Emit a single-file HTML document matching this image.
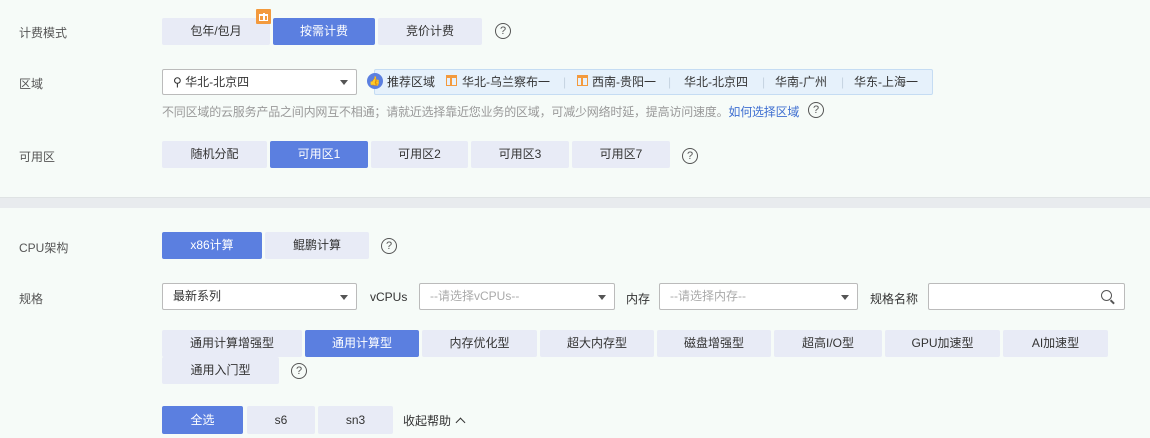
<!DOCTYPE html>
<html><head><meta charset="utf-8"><style>
*{margin:0;padding:0;box-sizing:border-box}
body{width:1150px;height:438px;background:#f6fbf8;font-family:"Liberation Sans","Noto Sans CJK SC",sans-serif;font-size:12px;color:#333;position:relative;overflow:hidden}
.a{position:absolute;white-space:nowrap}
.lbl{position:absolute;left:19px;color:#555}
.b{position:absolute;background:#e8ebf6;color:#333;text-align:center;border-radius:2px}
.on{background:#5b7fe0;color:#fff}
.q{position:absolute;width:16px;height:16px;border:1.3px solid #555;border-radius:50%;font-size:11px;line-height:14px;text-align:center;color:#555}
.sel{position:absolute;background:#fff;border:1px solid #bbb;border-radius:2px;padding-left:10px}
.sel:after{content:"";position:absolute;right:8px;top:50%;margin-top:-2px;border:4px solid transparent;border-top:5px solid #555;border-bottom:0}
.ph{color:#aaa}
.s{position:absolute;top:5px;color:#c5d3e0}
.g{position:absolute;top:6px;width:11px;height:11px;border:1.5px solid #f39a3d;border-top-width:3px}
.g:after{content:"";position:absolute;left:3px;top:-2px;width:1.5px;height:9px;background:#f39a3d}
</style></head><body>
<div class="lbl" style="top:24px">计费模式</div>
<div class="b" style="left:162px;top:18px;width:108px;height:27px;line-height:27px">包年/包月</div>
<div class="b on" style="left:273px;top:18px;width:102px;height:27px;line-height:27px">按需计费</div>
<div class="b" style="left:378px;top:18px;width:104px;height:27px;line-height:27px">竞价计费</div>
<div class="a" style="left:256px;top:9px;width:15px;height:15px;background:#f39a3d;border-radius:1px"><div style="position:absolute;left:3px;top:5px;width:9px;height:7px;border:1.5px solid #fff;border-top-width:2px"></div><div style="position:absolute;left:7px;top:4px;width:1.5px;height:8px;background:#fff"></div></div>
<div class="q" style="left:495px;top:23px">?</div>

<div class="lbl" style="top:75px">区域</div>
<div class="sel" style="left:162px;top:69px;width:195px;height:26px;line-height:24px">⚲ 华北-北京四</div>
<div class="a" style="left:374px;top:69px;width:559px;height:26px;background:#e6f1fb;border:1px solid #c5dcf3;border-radius:2px"></div>
<div class="a" style="left:367px;top:73px;width:16px;height:16px;border-radius:50%;background:#5b7fe0;color:#fff;font-size:9px;line-height:16px;text-align:center">👍</div>
<div class="a" style="left:387px;top:69px;line-height:26px;width:600px;height:26px">
<span class="a" style="left:0;top:0">推荐区域</span>
<span class="g" style="left:59px"></span>
<span class="a" style="left:75px;top:0">华北-乌兰察布一</span>
<span class="s" style="left:176px;top:0">|</span>
<span class="g" style="left:190px"></span>
<span class="a" style="left:205px;top:0">西南-贵阳一</span>
<span class="s" style="left:281px;top:0">|</span>
<span class="a" style="left:297px;top:0">华北-北京四</span>
<span class="s" style="left:375px;top:0">|</span>
<span class="a" style="left:388px;top:0">华南-广州</span>
<span class="s" style="left:454px;top:0">|</span>
<span class="a" style="left:467px;top:0">华东-上海一</span>
</div>
<div class="a" style="left:162px;top:103px;color:#999;font-size:12px;letter-spacing:-0.2px">不同区域的云服务产品之间内网互不相通；请就近选择靠近您业务的区域，可减少网络时延，提高访问速度。<span style="color:#3f6fd1">如何选择区域</span></div>
<div class="q" style="left:808px;top:102px">?</div>

<div class="lbl" style="top:148px">可用区</div>
<div class="b" style="left:162px;top:141px;width:105px;height:27px;line-height:27px">随机分配</div>
<div class="b on" style="left:270px;top:141px;width:98px;height:27px;line-height:27px">可用区1</div>
<div class="b" style="left:371px;top:141px;width:97px;height:27px;line-height:27px">可用区2</div>
<div class="b" style="left:471px;top:141px;width:98px;height:27px;line-height:27px">可用区3</div>
<div class="b" style="left:572px;top:141px;width:98px;height:27px;line-height:27px">可用区7</div>
<div class="q" style="left:682px;top:148px">?</div>

<div class="a" style="left:0;top:197px;width:1150px;height:11px;background:#e8ebee;border-top:1px solid #dfe3e4"></div>

<div class="lbl" style="top:239px">CPU架构</div>
<div class="b on" style="left:162px;top:232px;width:100px;height:27px;line-height:27px">x86计算</div>
<div class="b" style="left:265px;top:232px;width:104px;height:27px;line-height:27px">鲲鹏计算</div>
<div class="q" style="left:381px;top:238px">?</div>

<div class="lbl" style="top:290px">规格</div>
<div class="sel" style="left:162px;top:283px;width:195px;height:27px;line-height:25px">最新系列</div>
<div class="a" style="left:370px;top:290px">vCPUs</div>
<div class="sel ph" style="left:419px;top:283px;width:196px;height:27px;line-height:25px">--请选择vCPUs--</div>
<div class="a" style="left:626px;top:290px">内存</div>
<div class="sel ph" style="left:659px;top:283px;width:199px;height:27px;line-height:25px">--请选择内存--</div>
<div class="a" style="left:870px;top:290px">规格名称</div>
<div class="a" style="left:928px;top:283px;width:197px;height:27px;background:#fff;border:1px solid #bbb;border-radius:2px"><div style="position:absolute;right:12px;top:6px;width:11px;height:11px;border:1.5px solid #555;border-radius:50%"></div><div style="position:absolute;right:9px;top:17px;width:5px;height:1.5px;background:#555;transform:rotate(45deg)"></div></div>

<div class="b" style="left:162px;top:330px;width:140px;height:27px;line-height:27px">通用计算增强型</div>
<div class="b on" style="left:305px;top:330px;width:114px;height:27px;line-height:27px">通用计算型</div>
<div class="b" style="left:422px;top:330px;width:115px;height:27px;line-height:27px">内存优化型</div>
<div class="b" style="left:540px;top:330px;width:114px;height:27px;line-height:27px">超大内存型</div>
<div class="b" style="left:657px;top:330px;width:114px;height:27px;line-height:27px">磁盘增强型</div>
<div class="b" style="left:774px;top:330px;width:108px;height:27px;line-height:27px">超高I/O型</div>
<div class="b" style="left:885px;top:330px;width:115px;height:27px;line-height:27px">GPU加速型</div>
<div class="b" style="left:1003px;top:330px;width:105px;height:27px;line-height:27px">AI加速型</div>
<div class="b" style="left:162px;top:357px;width:117px;height:27px;line-height:27px">通用入门型</div>
<div class="q" style="left:291px;top:363px">?</div>

<div class="b on" style="left:162px;top:406px;width:81px;height:28px;line-height:28px">全选</div>
<div class="b" style="left:247px;top:406px;width:68px;height:28px;line-height:28px">s6</div>
<div class="b" style="left:318px;top:406px;width:75px;height:28px;line-height:28px">sn3</div>
<div class="a" style="left:403px;top:412px">收起帮助 <span style="display:inline-block;width:7px;height:7px;border-left:1.5px solid #333;border-top:1.5px solid #333;transform:rotate(45deg);margin-left:3px;position:relative;top:1px"></span></div>
</body></html>
